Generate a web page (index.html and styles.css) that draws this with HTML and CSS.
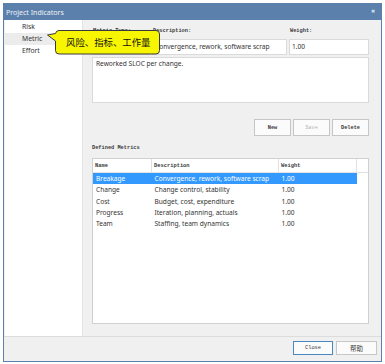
FILE: index.html
```html
<!DOCTYPE html>
<html lang="en">
  <head>
    <title>Project Indicators</title>
    <meta charset="UTF-8">
    <link rel="stylesheet" href="styles.css">
  </head>
  <body>
    <div class="window">
      <div class="titlebar">
        <span class="title">Project Indicators</span>
        <span class="close-x">&#x2716;</span>
      </div>
      <div class="main">
        <ul class="nav">
          <li>Risk</li>
          <li class="active">Metric</li>
          <li>Effort</li>
        </ul>
        <div class="panel">
          <div class="fields">
            <label>Metric Type:</label>
            <label>Description:</label>
            <label>Weight:</label>
            <div class="box"></div>
            <div class="box desc">Convergence, rework, software scrap</div>
            <div class="box">1.00</div>
          </div>
          <div class="memo">Reworked SLOC per change.</div>
          <div class="actions">
            <button>New</button>
            <button class="disabled">Save</button>
            <button>Delete</button>
          </div>
          <div class="caption">Defined Metrics</div>
          <div class="grid">
            <table>
              <tr class="head"><th>Name</th><th>Description</th><th>Weight</th><th class="pad"></th></tr>
              <tr class="sel"><td>Breakage</td><td>Convergence, rework, software scrap</td><td>1.00</td><td class="pad"></td></tr>
              <tr><td>Change</td><td>Change control, stability</td><td>1.00</td><td class="pad"></td></tr>
              <tr><td>Cost</td><td>Budget, cost, expenditure</td><td>1.00</td><td class="pad"></td></tr>
              <tr><td>Progress</td><td>Iteration, planning, actuals</td><td>1.00</td><td class="pad"></td></tr>
              <tr><td>Team</td><td>Staffing, team dynamics</td><td>1.00</td><td class="pad"></td></tr>
            </table>
          </div>
        </div>
      </div>
      <div class="footer">
        <button class="focus">Close</button>
        <button class="cjk">帮助</button>
      </div>

      <div class="tip">
        <svg width="116" height="28" viewBox="0 0 116 28">
          <path d="M13 1.5 H110 Q113.5 1.5 113.5 5 V21.5 Q113.5 25 110 25 H13 Q9.5 25 9.5 21.5 V12 L1.5 6 L9.5 4.5 Q10 1.5 13 1.5 Z" fill="#f7f500" stroke="#3a3a3a" stroke-width="1"/>
        </svg>
        <span class="tip-text">风险、指标、工作量</span>
      </div>
    </div>
  </body>
</html>
```

FILE: styles.css
```css
body {
  margin: 0;
  background: white;
}

.window {
  position: relative;
  margin: 3px 0 0 3px;
  width: 379px;
  height: 359px;
  box-sizing: border-box;
  border: 1px solid #5b80ab;
  background: #f0f0f0;
  display: flex;
  flex-direction: column;
}

.titlebar {
  height: 16px;
  background: #5b80ab;
  display: flex;
  align-items: center;
  justify-content: space-between;
  padding: 1px 6px 0 2px;
  box-sizing: border-box;
  font-family: "Noto Sans", sans-serif;
  font-size: 7px;
  color: #eef2f7;
}
.close-x {
  font-size: 5px;
  color: #d6e0ec;
  margin-top: -3px;
}

.main {
  height: 316px;
  display: flex;
  padding-left: 1px;
}

.nav {
  list-style: none;
  margin: 0;
  padding: 1px 0 0;
  width: 79px;
  background: white;
  border-right: 1px solid #e4e4e4;
  box-sizing: border-box;
  font-family: "Noto Sans", sans-serif;
  font-size: 6.8px;
  color: #333;
}
.nav li {
  height: 12px;
  line-height: 12px;
  padding-left: 17px;
}
.nav li.active {
  background: #ececec;
}

.panel {
  flex: 1;
  padding: 6px 12px 12px 9px;
  display: flex;
  flex-direction: column;
}

label, .caption, button {
  font-family: "Liberation Mono", monospace;
  font-weight: bold;
  font-size: 5.3px;
  color: #3a3a3a;
}

.fields {
  display: grid;
  grid-template-columns: 58px 135px 80px;
  grid-template-rows: 10px 16px;
  column-gap: 2px;
  row-gap: 3px;
}
.fields label {
  line-height: 10px;
  padding-left: 1px;
}
.box {
  background: white;
  border: 1px solid #dadada;
  box-sizing: border-box;
  font-family: "Noto Sans", sans-serif;
  font-size: 6.6px;
  line-height: 14px;
  padding-left: 2px;
  color: #333;
  white-space: nowrap;
  overflow: hidden;
}

.memo {
  margin-top: 2px;
  height: 46px;
  background: white;
  border: 1px solid #dadada;
  box-sizing: border-box;
  font-family: "Noto Sans", sans-serif;
  font-size: 6.6px;
  color: #333;
  padding: 1px 3px;
}

.actions {
  margin-top: 16px;
  display: flex;
  justify-content: flex-end;
  gap: 2px;
}
button {
  background: #fbfbfb;
  border: 1px solid #c6c6c6;
  padding: 0;
  margin: 0;
}
.actions button {
  width: 37px;
  height: 17px;
}
button.disabled {
  color: #b5b5b5;
  font-weight: normal;
}

.caption {
  margin-top: 8px;
  height: 8px;
  line-height: 8px;
}

.grid {
  margin-top: 6px;
  height: 166px;
  background: white;
  border: 1px solid #d0d0d0;
  box-sizing: border-box;
}
table {
  border-collapse: collapse;
  width: 100%;
  table-layout: fixed;
}
th {
  height: 13px;
  text-align: left;
  padding: 0 0 0 2px;
  border-right: 1px solid #e2e2e2;
  border-bottom: 1px solid #e2e2e2;
  font-family: "Liberation Mono", monospace;
  font-size: 5.4px;
  color: #3a3a3a;
}
th:nth-child(1) { width: 56px; }
th:nth-child(2) { width: 124px; }
th:nth-child(3) { width: 75px; }
th.pad { border-right: none; }
td {
  height: 11.3px;
  padding: 0 0 0 3px;
  font-family: "Noto Sans", sans-serif;
  font-size: 6.6px;
  color: #333;
  white-space: nowrap;
  overflow: hidden;
}
tr.sel td {
  background: #3399ff;
  color: white;
}
tr.sel td.pad {
  background: white;
}

.footer {
  flex: 1;
  border-top: 1px solid #dcdcdc;
  display: flex;
  justify-content: flex-end;
  gap: 3px;
  padding: 4px 4px 0 0;
}
.footer button {
  width: 40px;
  height: 14px;
  font-weight: normal;
}
.footer button.focus {
  border-color: #4a86c0;
}
.footer button.cjk {
  width: 41px;
  font-family: "Noto Sans CJK SC", sans-serif;
  font-size: 6.5px;
}

.tip {
  position: absolute;
  left: 42px;
  top: 25px;
  width: 116px;
  height: 28px;
}
.tip svg {
  display: block;
}
.tip-text {
  position: absolute;
  left: 20px;
  top: 7px;
  font-family: "Noto Sans CJK SC", sans-serif;
  font-size: 9.4px;
  line-height: 12px;
  color: #111;
}
```
